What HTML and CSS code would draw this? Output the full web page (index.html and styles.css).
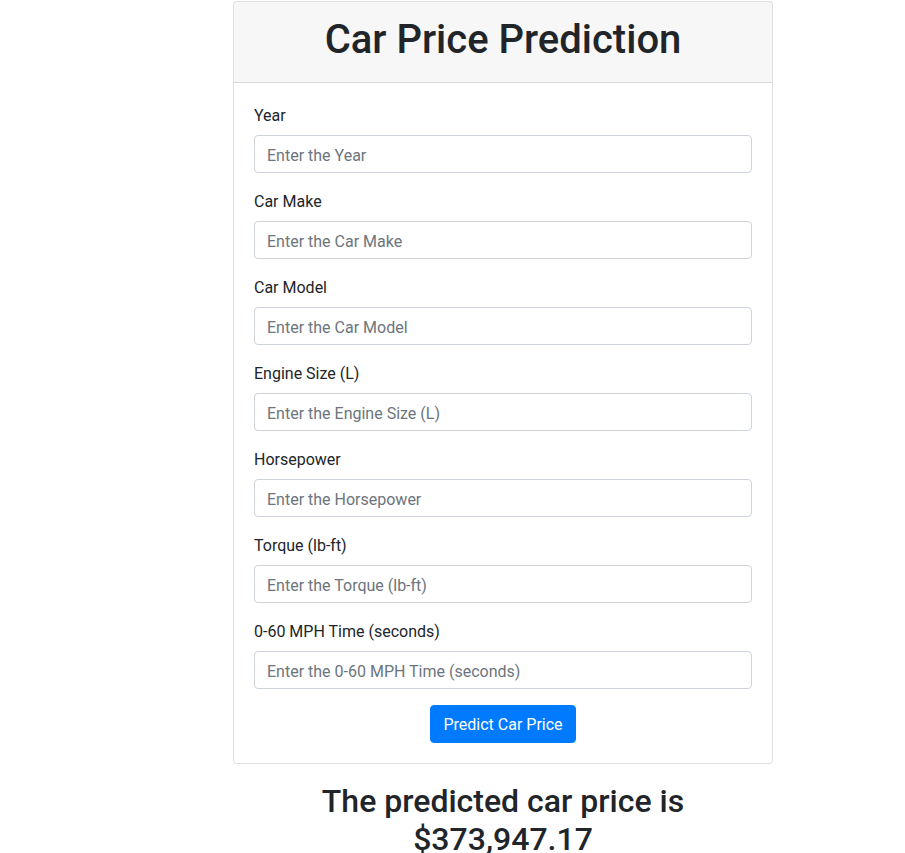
FILE: index.html
```html
<!DOCTYPE html>
<html lang="en">
<head>
<meta charset="utf-8">
<title>Car Price Prediction</title>
<link rel="stylesheet" href="styles.css">
</head>
<body>
<div class="wrap">
  <div class="card">
    <div class="card-header">
      <h1>Car Price Prediction</h1>
    </div>
    <form class="card-body">
      <div class="group">
        <label>Year</label>
        <input type="text" placeholder="Enter the Year">
      </div>
      <div class="group">
        <label>Car Make</label>
        <input type="text" placeholder="Enter the Car Make">
      </div>
      <div class="group">
        <label>Car Model</label>
        <input type="text" placeholder="Enter the Car Model">
      </div>
      <div class="group">
        <label>Engine Size (L)</label>
        <input type="text" placeholder="Enter the Engine Size (L)">
      </div>
      <div class="group">
        <label>Horsepower</label>
        <input type="text" placeholder="Enter the Horsepower">
      </div>
      <div class="group">
        <label>Torque (lb-ft)</label>
        <input type="text" placeholder="Enter the Torque (lb-ft)">
      </div>
      <div class="group">
        <label>0-60 MPH Time (seconds)</label>
        <input type="text" placeholder="Enter the 0-60 MPH Time (seconds)">
      </div>
      <div class="actions">
        <button type="button" class="btn">Predict Car Price</button>
      </div>
    </form>
  </div>
  <h2 class="result">The predicted car price is $373,947.17</h2>
</div>
</body>
</html>
```

FILE: styles.css
```css
* { box-sizing: border-box; }
body {
  margin: 0;
  font-family: Roboto, "Open Sans", sans-serif;
  font-size: 16px;
  line-height: 1.5;
  color: #212529;
  background: #fff;
}
.wrap {
  width: 540px;
  margin: 1px 0 0 233px;
}
.card {
  border: 1px solid rgba(0,0,0,.125);
  border-radius: 4px;
  background: #fff;
}
.card-header {
  background: rgba(0,0,0,.03);
  border-bottom: 1px solid rgba(0,0,0,.125);
  padding: 14px 20px 12px;
  text-align: center;
  border-radius: 3px 3px 0 0;
}
.card-header h1 {
  margin: 0 0 6px;
  font-size: 40px;
  font-weight: 500;
  line-height: 48px;
}
.card-body {
  display: block;
  padding: 20px;
}
.group {
  display: flex;
  flex-direction: column;
  margin-bottom: 16px;
}
.group label {
  margin-bottom: 6px;
  line-height: 26px;
}
.group input {
  height: 38px;
  padding: 7px 12px 5px;
  font: inherit;
  color: #495057;
  border: 1px solid #ced4da;
  border-radius: 4px;
  background: #fff;
}
.group input::placeholder { color: #6c757d; }
.actions {
  display: flex;
  justify-content: center;
}
.btn {
  font: inherit;
  line-height: 24px;
  padding: 7px 12px 5px;
  color: #fff;
  background: #007bff;
  border: 1px solid #007bff;
  border-radius: 4px;
}
.result {
  margin: 18px 0 0;
  text-align: center;
  font-size: 32px;
  font-weight: 500;
  line-height: 38px;
}
```
